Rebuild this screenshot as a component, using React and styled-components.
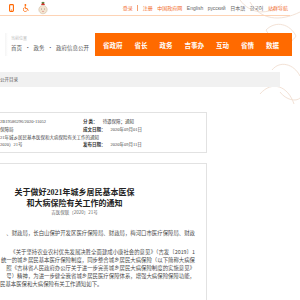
import React from "react";
import styled, { createGlobalStyle } from "styled-components";

const GlobalStyle = createGlobalStyle`
  html, body {
    margin: 0;
    padding: 0;
    background: #fff;
  }
  body {
    font-family: "Noto Sans CJK SC", "Noto Sans", sans-serif;
  }
  * {
    box-sizing: border-box;
  }
`;

const Page = styled.div`
  position: relative;
  width: 300px;
  height: 300px;
  overflow: hidden;
  background: #fff;
`;

const Decor = styled.svg`
  position: absolute;
  top: 0;
  right: 0;
  pointer-events: none;
`;

const TopBar = styled.div`
  position: relative;
  display: flex;
  align-items: center;
  justify-content: space-between;
  width: 290px;
  height: 16px;
  padding: 0 2px 0 9px;
  border-bottom: 1px solid #fdd3b5;
`;

const Icons = styled.div`
  display: flex;
  align-items: center;
  gap: 9px;
`;

const Links = styled.div`
  display: flex;
  align-items: center;
  gap: 4.5px;
  font-family: "Liberation Sans", "Noto Sans CJK SC", sans-serif;
  font-size: 5px;
  line-height: 6px;
`;

const TopLink = styled.span`
  color: ${(p) => (p.$hot ? "#f26a2a" : "#666")};
  white-space: nowrap;
`;

const Divider = styled.span`
  width: 1px;
  height: 6px;
  background: #f5a070;
`;

const Header = styled.div`
  position: relative;
  display: flex;
  margin-top: 17px;
  height: 23px;
`;

const Crumbs = styled.div`
  width: 90px;
  margin-left: 5px;
  padding: 2px 0 0 6px;
  background: linear-gradient(90deg, #f4f4f4 0, #fff 3px);
`;

const CrumbLabel = styled.div`
  font-size: 4px;
  line-height: 6px;
  color: #bbb;
`;

const CrumbPath = styled.div`
  margin-top: 3px;
  font-size: 5.5px;
  line-height: 8px;
  color: #555;
  white-space: nowrap;
  span {
    margin: 0 3px;
  }
`;

const Nav = styled.nav`
  display: flex;
  align-items: center;
  gap: 12px;
  width: 197px;
  padding: 0 11px 0 8px;
  background: #ff6a00;
`;

const NavItem = styled.span`
  color: #fff;
  font-size: 6.5px;
  font-weight: 700;
  white-space: nowrap;
`;

const CatalogBar = styled.div`
  position: relative;
  width: 280px;
  height: 15px;
  margin-top: 16px;
  background: #f1f1f1;
  font-size: 4.5px;
  line-height: 15px;
  color: #555;
`;

const Column = styled.div`
  position: relative;
  width: 264px;
  margin-left: -57px;
`;

const InfoBox = styled.div`
  margin-top: 25px;
  padding: 5px 0 3px 56px;
  border: 1px solid #e2e2e2;
  background: #fff;
`;

const InfoRow = styled.div`
  display: flex;
  height: 7.8px;
  font-family: "Liberation Serif", "Noto Sans CJK SC", serif;
  font-size: 4.5px;
  line-height: 7.8px;
  color: #444;
  white-space: nowrap;
`;

const InfoLeft = styled.div`
  width: 83px;
`;

const InfoLabel = styled.span`
  margin-right: 5px;
  font-weight: 700;
  color: #333;
`;

const ArticleBox = styled.div`
  margin-top: 10px;
  min-height: 150px;
  padding: 0 11px 0 10px;
  border: 1px solid #e2e2e2;
  border-bottom: none;
  background: #fff;
`;

const Title = styled.h1`
  margin: 22.5px 0 0;
  font-family: "Liberation Serif", "Noto Sans CJK SC", serif;
  font-size: 8px;
  font-weight: 700;
  line-height: 11px;
  color: #222;
  text-align: center;
`;

const DocNo = styled.div`
  font-size: 4.5px;
  line-height: 7px;
  color: #666;
  text-align: center;
`;

const Body = styled.div`
  margin-top: 13.5px;
  font-size: 5.4px;
  line-height: 8px;
  color: #4a4a4a;
`;

const Para = styled.div`
  & + & {
    margin-top: 11px;
  }
`;

const Line = styled.div`
  white-space: nowrap;
  text-align: ${(p) => (p.$tail ? "left" : "right")};
  padding-left: ${(p) => (p.$tail ? "46px" : "0")};
`;

function PhoneIcon() {
  return (
    <svg width="5" height="8" viewBox="0 0 5 8">
      <rect x="0.6" y="0.6" width="3.8" height="6.8" rx="0.8" fill="none" stroke="#f60" strokeWidth="1.1" />
      <rect x="2" y="5.6" width="1" height="0.8" fill="#f60" />
    </svg>
  );
}

function AccessIcon() {
  return (
    <svg width="6" height="8" viewBox="0 0 6 8">
      <circle cx="2.4" cy="1" r="0.9" fill="#f60" />
      <path d="M2.2 2.2 L2.5 4.6 L4.3 4.6 L5.2 6.8" fill="none" stroke="#f60" strokeWidth="0.9" />
      <path d="M1.6 3.6 A2 2 0 1 0 3.9 6.6" fill="none" stroke="#f60" strokeWidth="0.8" />
    </svg>
  );
}

function Mascot() {
  return (
    <svg width="10" height="14" viewBox="0 0 10 14">
      <path d="M3 4 L5 0.6 L7 4 Z" fill="#d9302a" />
      <rect x="3.6" y="1.2" width="2.8" height="1.2" fill="#3c8a3a" />
      <circle cx="5" cy="8.6" r="4.2" fill="#f3e4cf" stroke="#c8b59c" strokeWidth="0.5" />
      <circle cx="3.5" cy="8" r="0.45" fill="#555" />
      <circle cx="6.5" cy="8" r="0.45" fill="#555" />
      <path d="M4 10.2 Q5 11 6 10.2" fill="none" stroke="#c66" strokeWidth="0.5" />
    </svg>
  );
}

function Decoration() {
  return (
    <Decor width="80" height="120" viewBox="0 0 80 120">
      <g fill="none" stroke="#f3e2d6" strokeWidth="1">
        <path d="M20 0 C30 14 48 16 62 4" />
        <path d="M30 2 C40 20 60 22 80 12" />
        <path d="M46 30 C56 20 70 24 76 36 C70 46 56 48 46 30 Z" />
        <path d="M52 70 C60 60 74 64 80 76" />
        <path d="M40 94 C52 80 68 86 74 104" />
        <path d="M60 92 C66 100 76 102 80 98" />
      </g>
    </Decor>
  );
}

const topLinks = [
  { text: "中国政府网", hot: true },
  { text: "English" },
  { text: "русский" },
  { text: "日本語" },
  { text: "한국어" },
  { text: "站群导航", hot: true },
];

const navItems = ["省政府", "省长", "政务", "吉事办", "互动", "省情", "数据"];

const infoRows = [
  { left: "2B19586296/2020-11052", label: "分 类：", value: "待遇保障；通知" },
  { left: "保障局", label: "成文日期：", value: "2020年09月01日" },
  { left: "21年城乡居民基本医保和大病保险有关工作的通知" },
  { left: "2020）21号", label: "发布日期：", value: "2020年09月11日" },
];

const paragraphs = [
  ["、财政局，长白山保护开发区医疗保障局、财政局，梅河口市医疗保障局、财政"],
  [
    "《关于坚持农业农村优先发展决胜全面建成小康社会的意见》（吉发〔2019〕1",
    "统一的城乡居民基本医疗保险制度，同步整合城乡居民大病保险（以下简称大病保",
    "照《吉林省人民政府办公厅关于进一步完善城乡居民大病保险制度的实施意见》",
    "号）精神，为进一步健全我省城乡居民医疗保障体系，增强大病保险保障功能，",
  ],
];

export default function App() {
  return (
    <>
      <GlobalStyle />
      <Page>
        <Decoration />
        <TopBar>
          <Icons>
            <PhoneIcon />
            <AccessIcon />
            <Mascot />
          </Icons>
          <Links>
            <TopLink $hot>登录</TopLink>
            <Divider />
            <TopLink $hot>注册</TopLink>
            {topLinks.map((l) => (
              <TopLink key={l.text} $hot={l.hot}>
                {l.text}
              </TopLink>
            ))}
          </Links>
        </TopBar>

        <Header>
          <Crumbs>
            <CrumbLabel>当前位置</CrumbLabel>
            <CrumbPath>
              首页<span>·</span>政务<span>·</span>政府信息公开
            </CrumbPath>
          </Crumbs>
          <Nav>
            {navItems.map((n) => (
              <NavItem key={n}>{n}</NavItem>
            ))}
          </Nav>
        </Header>

        <CatalogBar>公开目录</CatalogBar>

        <Column>
          <InfoBox>
            {infoRows.map((r, i) => (
              <InfoRow key={i}>
                <InfoLeft>{r.left}</InfoLeft>
                {r.label && (
                  <div>
                    <InfoLabel>{r.label}</InfoLabel>
                    {r.value}
                  </div>
                )}
              </InfoRow>
            ))}
          </InfoBox>

          <ArticleBox>
            <Title>
              关于做好2021年城乡居民基本医保
              <br />
              和大病保险有关工作的通知
            </Title>
            <DocNo>吉医保联〔2020〕21号</DocNo>
            <Body>
              {paragraphs.map((p, i) => (
                <Para key={i}>
                  {p.map((line) => (
                    <Line key={line}>{line}</Line>
                  ))}
                  {i === 1 && <Line $tail>民基本医保和大病保险有关工作通知如下。</Line>}
                </Para>
              ))}
            </Body>
          </ArticleBox>
        </Column>
      </Page>
    </>
  );
}
